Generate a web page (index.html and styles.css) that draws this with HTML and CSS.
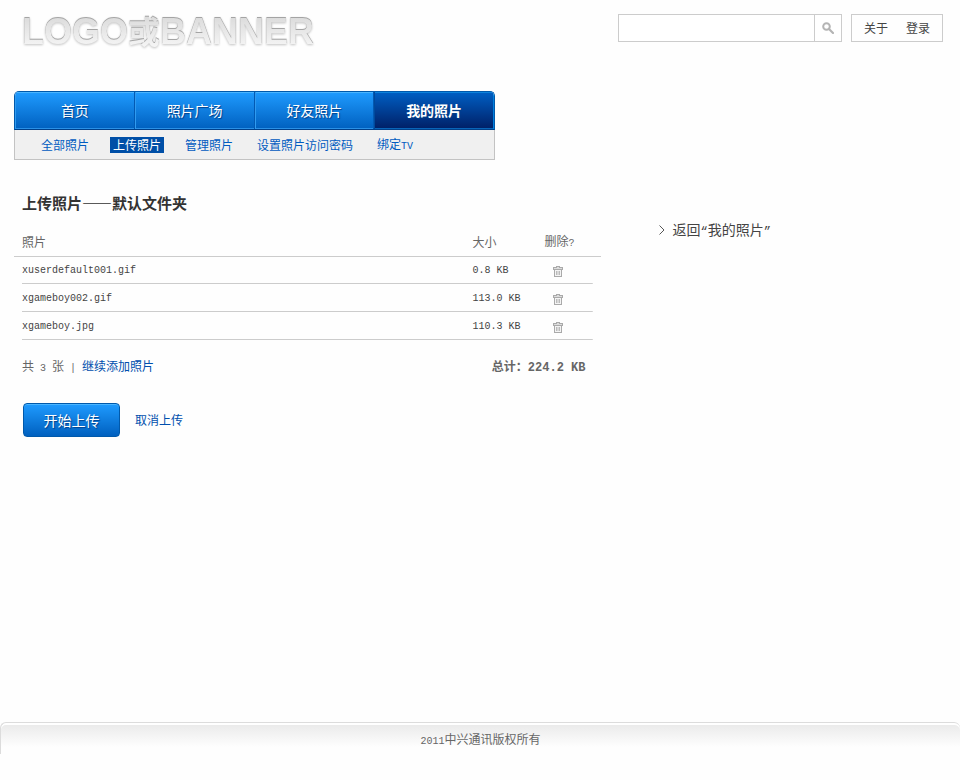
FILE: index.html
```html
<!DOCTYPE html>
<html lang="zh-CN">
<head>
<meta charset="utf-8">
<meta name="viewport" content="width=device-width, initial-scale=1">
<title>上传照片</title>
<link rel="stylesheet" href="styles.css">
</head>
<body>
<svg class="sprite" aria-hidden="true">
  <symbol id="trash" viewBox="0 0 10 11">
    <path fill="#aaa" d="M3 0h4v1h3v3H0V1h3zM1 4h8v7H1z"/>
    <path fill="#ddd" d="M4 1h2v1H4zM1 2h8v1H1z"/>
    <path fill="#f4f4f4" d="M2 4h6v6H2z"/>
    <path fill="#bbb" d="M3 5h1v4H3zM6 5h1v4H6z"/>
    <path fill="#d8d8d8" d="M4 5h2v4H4z"/>
  </symbol>
</svg>
<header class="header">
  <h1 class="logo">LOGO<span class="logo-cjk">或</span>BANNER</h1>
  <div class="tools">
    <form class="search">
      <input class="search-input" type="text" aria-label="搜索">
      <button class="search-button" type="submit" aria-label="搜索">
        <svg width="12" height="12" viewBox="0 0 12 12"><circle cx="4.5" cy="4.5" r="3.3" fill="none" stroke="#b4b4b4" stroke-width="2"/><path d="M7 7l4 4" stroke="#b4b4b4" stroke-width="2.2" stroke-linecap="round"/></svg>
      </button>
    </form>
    <nav class="account" aria-label="账户">
      <a href="#">关于</a>
      <a href="#">登录</a>
    </nav>
  </div>
</header>
<nav class="nav" aria-label="主导航">
  <div class="tabs">
    <a class="tab" href="#">首页</a>
    <a class="tab" href="#">照片广场</a>
    <a class="tab" href="#">好友照片</a>
    <a class="tab tab-active" href="#">我的照片</a>
  </div>
  <div class="subnav">
    <a href="#">全部照片</a>
    <a class="current" href="#">上传照片</a>
    <a href="#">管理照片</a>
    <a href="#">设置照片访问密码</a>
    <a href="#">绑定<span class="mono">TV</span></a>
  </div>
</nav>
<main class="main">
  <section class="upload">
    <h2 class="title">上传照片——默认文件夹</h2>
    <table class="files">
      <colgroup><col><col class="col-size"><col class="col-delete"></colgroup>
      <thead>
        <tr><th scope="col">照片</th><th scope="col">大小</th><th scope="col">删除<span class="mono">?</span></th></tr>
      </thead>
      <tbody>
        <tr><td>xuserdefault001.gif</td><td>0.8 KB</td><td><button class="delete" type="button" aria-label="删除"><svg width="10" height="11"><use href="#trash"/></svg></button></td></tr>
        <tr><td>xgameboy002.gif</td><td>113.0 KB</td><td><button class="delete" type="button" aria-label="删除"><svg width="10" height="11"><use href="#trash"/></svg></button></td></tr>
        <tr><td>xgameboy.jpg</td><td>110.3 KB</td><td><button class="delete" type="button" aria-label="删除"><svg width="10" height="11"><use href="#trash"/></svg></button></td></tr>
      </tbody>
    </table>
    <div class="summary">
      <p>共<span class="mono"> 3 </span>张<span class="mono"> | </span><a href="#">继续添加照片</a></p>
      <p class="total">总计：<span class="mono">224.2 KB</span></p>
    </div>
    <div class="actions">
      <button class="start" type="button">开始上传</button>
      <a href="#">取消上传</a>
    </div>
  </section>
  <aside class="side">
    <a class="back" href="#"><svg width="6" height="10" viewBox="0 0 6 10"><path d="M.5.5L5 5L.5 9.5" fill="none" stroke="#555"/></svg><span>返回<span class="quote">“</span>我的照片<span class="quote">”</span></span></a>
  </aside>
</main>
<footer class="footer"><span class="mono">2011</span>中兴通讯版权所有</footer>
</body>
</html>
```
FILE: styles.css
```css
* { box-sizing: border-box; }

body {
  display: flex;
  flex-direction: column;
  min-height: 100vh;
  margin: 0;
  padding-bottom: 26px;
  background: #fefefe;
  color: #444;
  font: 12px/16px "Noto Sans CJK SC", sans-serif;
}

h1, h2, p { margin: 0; }
a { color: #004fad; text-decoration: none; }
button { padding: 0; font: inherit; cursor: pointer; }
svg { display: block; }
.sprite { position: absolute; width: 0; height: 0; }

.mono {
  font-family: "Liberation Mono", monospace;
  font-size: 10px;
  line-height: 12px;
  white-space: pre;
}

.header {
  display: flex;
  justify-content: space-between;
  align-items: flex-start;
  height: 91px;
  padding: 14px 17px 0 22px;
}

.logo {
  background: linear-gradient(#dcdcdc 10%, #f4f4f4 85%);
  background-clip: text;
  -webkit-background-clip: text;
  color: transparent;
  font: bold 36px/36px "Liberation Sans", "Noto Sans CJK SC", sans-serif;
  filter: drop-shadow(0 -1px 0 #a4a4a4) drop-shadow(0 1px 1px #c4c4c4);
}
.logo-cjk { font-size: 32px; }

.tools { display: flex; gap: 9px; }
.search {
  display: flex;
  height: 28px;
  border: 1px solid #ccc;
  background: #fff;
}
.search-input {
  width: 195px;
  padding: 0 6px;
  border: 0;
  background: none;
  font: inherit;
}
.search-button {
  display: grid;
  place-items: center;
  width: 27px;
  border: 0;
  border-left: 1px solid #ccc;
  background: none;
}
.account {
  display: flex;
  gap: 18px;
  height: 28px;
  padding: 0 12px;
  border: 1px solid #ccc;
  line-height: 26px;
}
.account a { color: #444; }

.nav {
  width: 481px;
  max-width: calc(100% - 28px);
  margin-left: 14px;
}
.tabs {
  display: grid;
  grid-template-columns: repeat(4, 1fr);
  height: 39px;
  overflow: hidden;
  border: 1px solid #0059ab;
  border-bottom-color: #00408a;
  border-radius: 5px 5px 0 0;
}
.tab {
  border-left: 1px solid #2f9bf0;
  border-right: 1px solid #0259b3;
  background: linear-gradient(#1f9bff, #0060bf);
  box-shadow: inset 0 1px #4ab5ff, inset 0 -1px #2a90e6;
  color: #fff;
  font-size: 14px;
  line-height: 36px;
  text-align: center;
  text-shadow: 1px 1px 1px #00408a;
}
.tab-active {
  border-left-color: #004a9c;
  border-right-color: #0080dd;
  background: linear-gradient(#005fc4, #001f66);
  box-shadow: inset 0 1px #0e83dc, inset 0 -1px #0864b8;
  font-weight: bold;
}
.subnav {
  display: flex;
  align-items: center;
  gap: 21px;
  height: 30px;
  padding-left: 26px;
  border: 1px solid #c3c3c3;
  border-top: 0;
  background: #f0f0f0;
}
.subnav a { padding-right: 3px; color: #005bc0; line-height: 16px; }
.subnav a:first-child { padding-right: 0; }
.subnav .current { padding: 0 3px; background: #004fa7; color: #fff; }

.main {
  display: grid;
  grid-template-columns: minmax(0, 172fr) minmax(0, 100fr);
  padding: 33px 17px 40px 14px;
}
.title {
  padding-left: 8px;
  color: #333;
  font-size: 15px;
  line-height: 20px;
}

.files {
  width: 100%;
  margin-top: 15px;
  border-collapse: collapse;
  table-layout: fixed;
}
.col-size { width: 72px; }
.col-delete { width: 57px; }
.files th {
  height: 28px;
  padding: 0;
  border-bottom: 1px solid #ccc;
  color: #666;
  font-weight: normal;
  text-align: left;
}
.files td {
  height: 28px;
  padding: 2px 0 0;
  font: 10px/16px "Liberation Mono", monospace;
}
.files th:first-child, .files td:first-child { padding-left: 8px; }
.files tbody tr {
  background: linear-gradient(#ccc, #ccc) center bottom / calc(100% - 16px) 1px no-repeat;
}
.delete {
  display: block;
  margin-left: 9px;
  border: 0;
  background: none;
}

.summary {
  display: flex;
  justify-content: space-between;
  padding: 18px 16px 0 8px;
  color: #666;
}
.total { font-weight: bold; }
.total .mono { font-size: 12px; }
.actions {
  display: flex;
  align-items: center;
  gap: 15px;
  margin-top: 28px;
  padding-left: 9px;
}
.start {
  width: 97px;
  height: 34px;
  border: 1px solid #0059ab;
  border-radius: 4px;
  background: linear-gradient(#1f9bff, #0060bf);
  box-shadow: inset 0 1px #4ab5ff;
  color: #fff;
  font-size: 14px;
  text-shadow: 1px 1px 1px #00408a;
}

.side { padding: 26px 0 0 58px; }
.back {
  display: flex;
  align-items: center;
  gap: 7px;
  color: #444;
  font-size: 14px;
  line-height: 20px;
}
.quote { font: 12px/16px "Liberation Mono", monospace; }

.footer {
  height: 32px;
  margin-top: auto;
  border: solid #dcdcdc;
  border-width: 1px 0 0 1px;
  border-radius: 6px 6px 0 0;
  background: linear-gradient(#e9e9e9, #fefefe 24px);
  box-shadow: inset 0 2px #fff;
  color: #666;
  line-height: 32px;
  text-align: center;
}
```
